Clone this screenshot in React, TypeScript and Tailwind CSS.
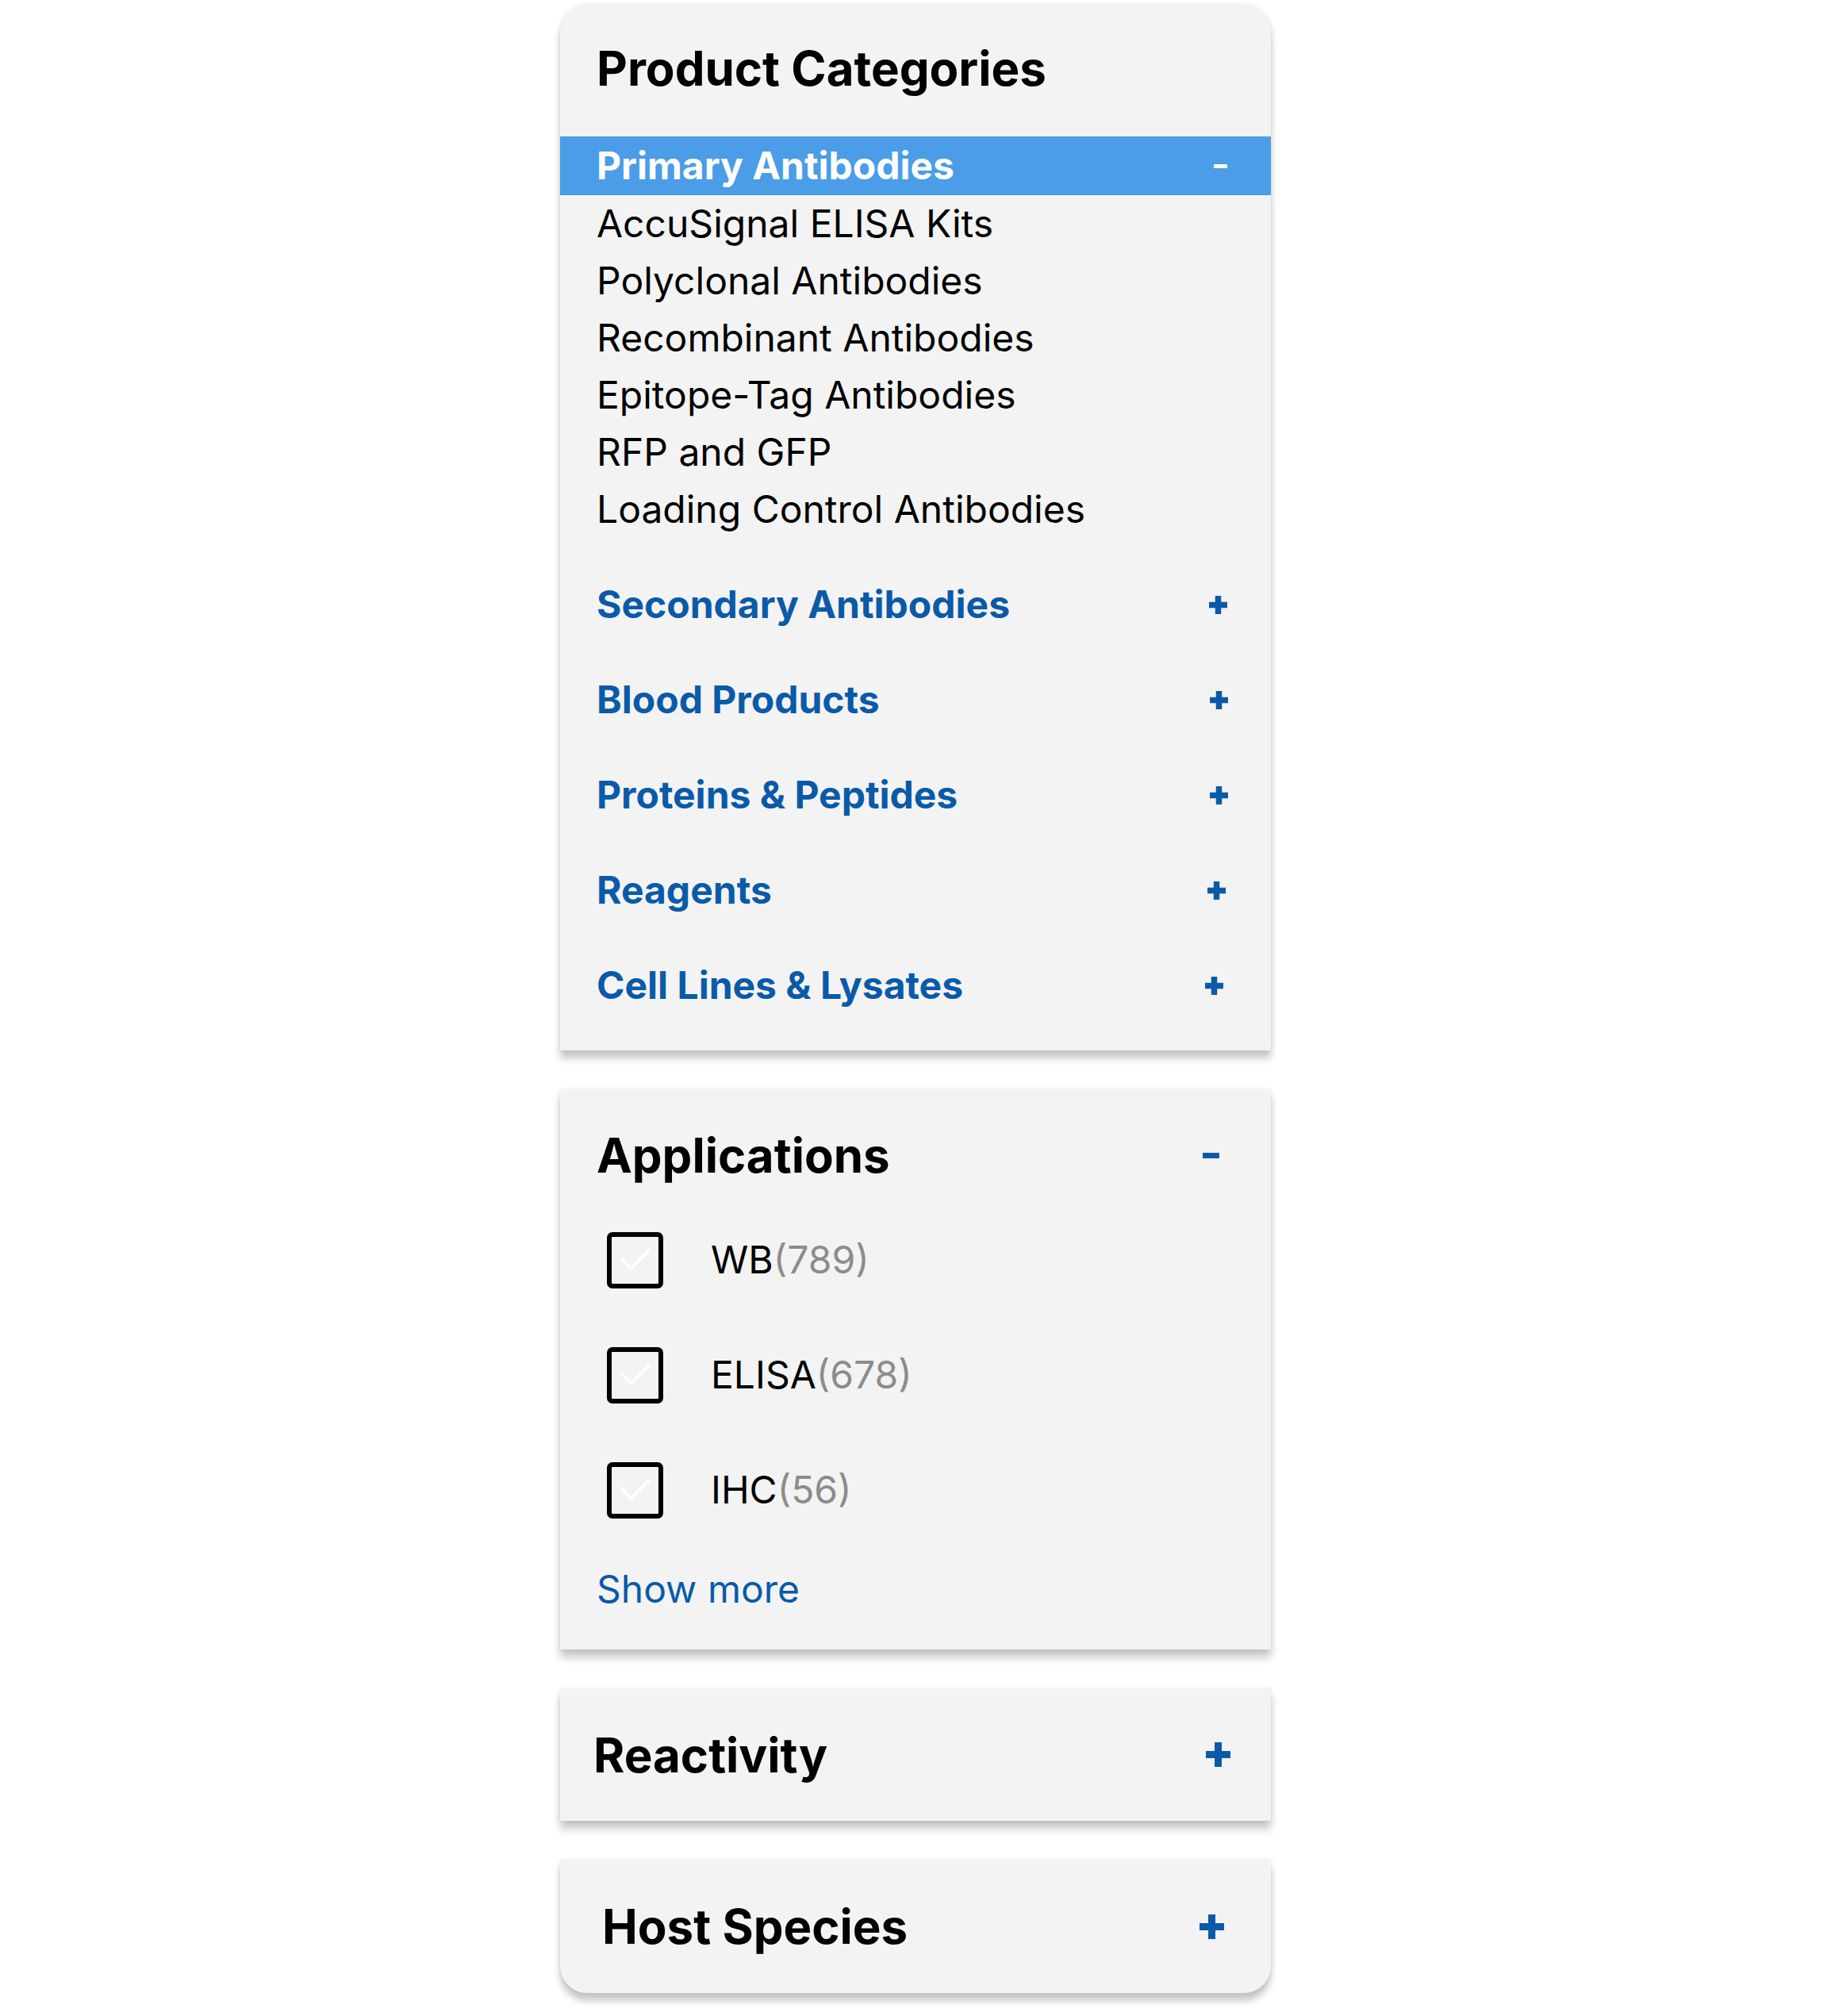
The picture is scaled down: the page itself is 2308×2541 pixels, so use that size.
import React from 'react';

const subItems = [
  'AccuSignal ELISA Kits',
  'Polyclonal Antibodies',
  'Recombinant Antibodies',
  'Epitope-Tag Antibodies',
  'RFP and GFP',
  'Loading Control Antibodies',
];

// right padding differs slightly per row in the original
const categories = [
  { name: 'Secondary Antibodies', pr: 'pr-[54px]' },
  { name: 'Blood Products', pr: 'pr-[53px]' },
  { name: 'Proteins & Peptides', pr: 'pr-[53px]' },
  { name: 'Reagents', pr: 'pr-[56px]' },
  { name: 'Cell Lines & Lysates', pr: 'pr-[59px]' },
];

const applications = [
  { name: 'WB', count: 789 },
  { name: 'ELISA', count: 678 },
  { name: 'IHC', count: 56 },
];

const Plus = ({ size = 25, stroke = 7.5 }: { size?: number; stroke?: number }) => (
  <svg width={size} height={size} viewBox={`0 0 ${size} ${size}`} className="shrink-0">
    <path d={`M${size / 2} 1V${size - 1}M1 ${size / 2}H${size - 1}`} stroke="#0a5aa8" strokeWidth={stroke} />
  </svg>
);

const Checkbox = () => (
  <div className="flex h-[71px] w-[71px] shrink-0 items-center justify-center rounded-[7px] border-[6px] border-black">
    <svg width="40" height="30" viewBox="0 0 40 30">
      <path d="M3 14l11 12L37 3" fill="none" stroke="white" strokeWidth="4" strokeLinecap="round" strokeLinejoin="round" opacity="0.9" />
    </svg>
  </div>
);

const panel = 'w-[896px] bg-[#f3f3f3] shadow-[0_10px_10px_rgba(0,0,0,0.22),0_0_6px_rgba(0,0,0,0.08)]';

export default function App() {
  return (
    <div className="flex min-h-screen w-full flex-col items-center gap-[49px] bg-white pt-[5px] pb-[29px] font-['Inter',sans-serif] text-black">
      {/* Product categories */}
      <div className={`${panel} rounded-t-[36px] pb-[22px]`}>
        <div className="h-[167px] pl-[46px] pt-[45px]">
          <h2 className="text-[60px] font-bold leading-[72px]">Product Categories</h2>
        </div>
        <div className="flex h-[74px] items-center justify-between bg-[#4a9de6] pl-[46px] pr-[55px]">
          <span className="text-[48px] font-bold leading-none text-white">Primary Antibodies</span>
          <div className="h-[5px] w-[17px] bg-white" />
        </div>
        <ul className="pb-[24px] pl-[46px]">
          {subItems.map((s) => (
            <li key={s} className="text-[48px] leading-[72px]">
              {s}
            </li>
          ))}
        </ul>
        {categories.map((c) => (
          <div key={c.name} className={`flex h-[120px] items-center justify-between pl-[46px] ${c.pr}`}>
            <span className="text-[48px] font-bold text-[#0a5aa8]">{c.name}</span>
            <Plus />
          </div>
        ))}
      </div>

      {/* Applications */}
      <div className={`${panel} pb-[40px] pt-[47px]`}>
        <div className="flex h-[72px] items-center justify-between pl-[46px] pr-[65px]">
          <h2 className="text-[60px] font-bold leading-[72px]">Applications</h2>
          <div className="h-[7px] w-[21px] bg-[#0a5aa8]" />
        </div>
        <div className="mt-[60px] flex flex-col gap-[73px] pl-[59px]">
          {applications.map((a) => (
            <label key={a.name} className="flex h-[72px] items-center gap-[60px]">
              <Checkbox />
              <span className="text-[48px]">
                {a.name}
                <span className="text-[#8c8c8c]">({a.count})</span>
              </span>
            </label>
          ))}
        </div>
        <div className="mt-[53px] pl-[46px] text-[48px] leading-[72px] text-[#0a5aa8]">Show more</div>
      </div>

      {/* Reactivity */}
      <div className={`${panel} flex h-[167px] items-center justify-between pl-[42px] pr-[50px]`}>
        <h2 className="text-[60px] font-bold">Reactivity</h2>
        <Plus size={33} stroke={9} />
      </div>

      {/* Host Species */}
      <div className={`${panel} flex h-[168px] items-center justify-between rounded-b-[34px] pl-[53px] pr-[58px]`}>
        <h2 className="text-[60px] font-bold">Host Species</h2>
        <Plus size={33} stroke={9} />
      </div>
    </div>
  );
}
